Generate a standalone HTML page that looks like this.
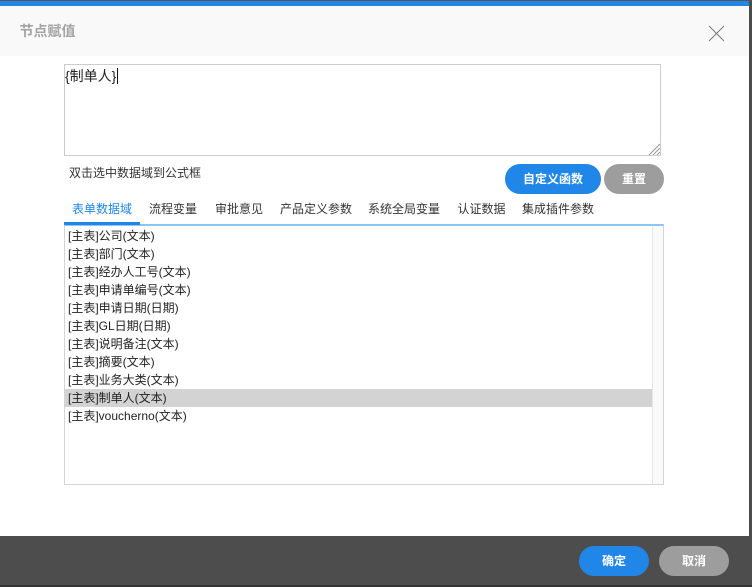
<!DOCTYPE html>
<html><head><meta charset="utf-8"><style>
html,body{margin:0;padding:0;width:752px;height:587px;overflow:hidden;background:#4c4c4c;font-family:"Liberation Sans","Noto Sans CJK SC",sans-serif;font-size:12px;color:#222}
div{position:absolute;box-sizing:border-box;white-space:nowrap}
.b{border-radius:15px;height:30px;line-height:30px;text-align:center;color:#fff;font-weight:bold;font-size:12px}
.t{top:200px;line-height:18px;color:#333}
.r{left:68px;line-height:18px;height:18px;color:#222}
</style></head><body>
<div style="left:0;top:0;width:749px;height:536px;background:#fff"></div>
<div style="left:0;top:0;width:752px;height:1px;background:#555"></div>
<div style="left:0;top:1px;width:749px;height:5px;background:#2086e8"></div>
<div style="left:0;top:6px;width:749px;height:50px;background:#f9f9f9"></div>
<div style="left:19.5px;top:20.5px;font-size:14px;font-weight:bold;color:#a3a3a3;line-height:20px">节点赋值</div>
<svg style="position:absolute;left:708px;top:25px" width="17" height="17"><path d="M1 1L16 16M16 1L1 16" stroke="#777" stroke-width="0.9" fill="none"/></svg>
<div style="left:64px;top:64px;width:597px;height:92px;border:1px solid #ccc;background:#fff"></div>
<div style="left:65px;top:67px;font-size:14px;line-height:18px;color:#222">{制单人}</div>
<div style="left:117px;top:68px;width:1px;height:16px;background:#111"></div>
<svg style="position:absolute;left:648px;top:143px" width="12" height="12"><path d="M1 12L12 1M5 12L12 5M9 12L12 9" stroke="#999" stroke-width="1" fill="none"/></svg>
<div style="left:69px;top:164px;line-height:18px;color:#333">双击选中数据域到公式框</div>
<div class="b" style="left:505px;top:164px;width:96px;background:#2086e8">自定义函数</div>
<div class="b" style="left:604px;top:164px;width:60px;background:#9d9d9d">重置</div>
<div class="t" style="left:72px;color:#2086e8">表单数据域</div>
<div class="t" style="left:149px">流程变量</div>
<div class="t" style="left:215px">审批意见</div>
<div class="t" style="left:280px">产品定义参数</div>
<div class="t" style="left:368px">系统全局变量</div>
<div class="t" style="left:457.5px">认证数据</div>
<div class="t" style="left:522px">集成插件参数</div>
<div style="left:64px;top:224px;width:600px;height:261px;border:1px solid #d4d4d4;border-top:2px solid #8cc5f5;background:#fff"></div>
<div style="left:64px;top:222px;width:76px;height:3px;background:#2086e8"></div>
<div style="left:652px;top:226px;width:11px;height:258px;background:#fafafa;border-left:1px solid #e6e6e6"></div>
<div style="left:65px;top:389px;width:587px;height:18px;background:#d3d3d3"></div>
<div class="r" style="top:227px">[主表]公司(文本)</div>
<div class="r" style="top:245px">[主表]部门(文本)</div>
<div class="r" style="top:263px">[主表]经办人工号(文本)</div>
<div class="r" style="top:281px">[主表]申请单编号(文本)</div>
<div class="r" style="top:299px">[主表]申请日期(日期)</div>
<div class="r" style="top:317px">[主表]GL日期(日期)</div>
<div class="r" style="top:335px">[主表]说明备注(文本)</div>
<div class="r" style="top:353px">[主表]摘要(文本)</div>
<div class="r" style="top:371px">[主表]业务大类(文本)</div>
<div class="r" style="top:389px">[主表]制单人(文本)</div>
<div class="r" style="top:407px">[主表]voucherno(文本)</div>
<div style="left:0;top:536px;width:752px;height:49px;background:#4d4d4d"></div>
<div style="left:0;top:585px;width:752px;height:2px;background:#333"></div>
<div class="b" style="left:579px;top:546px;width:70px;background:#2086e8">确定</div>
<div class="b" style="left:659px;top:546px;width:70px;background:#9d9d9d">取消</div>
</body></html>
